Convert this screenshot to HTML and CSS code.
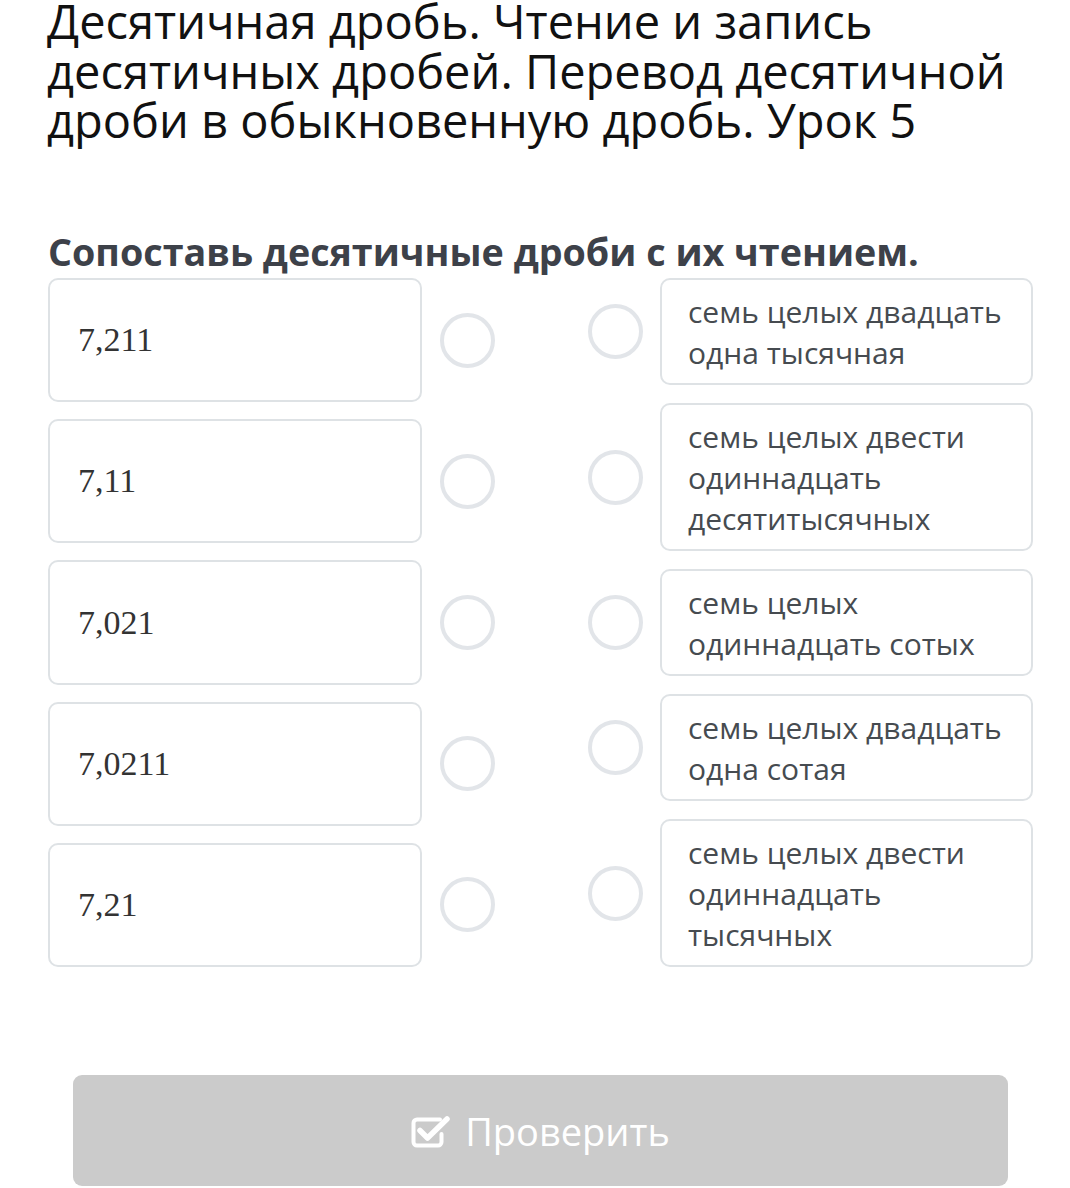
FILE: index.html
```html
<!DOCTYPE html>
<html lang="ru">
<head>
<meta charset="utf-8">
<link rel="stylesheet" href="styles.css">
</head>
<body>
<div class="page">
  <h1 class="title">Десятичная дробь. Чтение и запись десятичных дробей. Перевод десятичной дроби в обыкновенную дробь. Урок 5</h1>
  <h2 class="task">Сопоставь десятичные дроби с их чтением.</h2>
  <div class="match">
    <div class="col col-left">
      <div class="row"><div class="card num">7,211</div><span class="dot"></span></div>
      <div class="row"><div class="card num">7,11</div><span class="dot"></span></div>
      <div class="row"><div class="card num">7,021</div><span class="dot"></span></div>
      <div class="row"><div class="card num">7,0211</div><span class="dot"></span></div>
      <div class="row"><div class="card num">7,21</div><span class="dot"></span></div>
    </div>
    <div class="col col-right">
      <div class="row"><span class="dot"></span><div class="card words">семь целых двадцать одна тысячная</div></div>
      <div class="row"><span class="dot"></span><div class="card words">семь целых двести одиннадцать десятитысячных</div></div>
      <div class="row"><span class="dot"></span><div class="card words">семь целых одиннадцать сотых</div></div>
      <div class="row"><span class="dot"></span><div class="card words">семь целых двадцать одна сотая</div></div>
      <div class="row"><span class="dot"></span><div class="card words">семь целых двести одиннадцать тысячных</div></div>
    </div>
  </div>
  <button class="check-btn" type="button">
    <svg class="check-icon" viewBox="0 0 40 32" width="40" height="32" aria-hidden="true">
      <path d="M29 3.5 H6 a3.5 3.5 0 0 0 -3.5 3.5 v19 a3.5 3.5 0 0 0 3.5 3.5 h21 a3.5 3.5 0 0 0 3.5 -3.5 v-8" fill="none" stroke="#fff" stroke-width="4" stroke-linecap="round"/>
      <path d="M9 14.5 L16.5 22 L36 3" fill="none" stroke="#fff" stroke-width="5.5" stroke-linecap="round" stroke-linejoin="round"/>
    </svg>
    <span>Проверить</span>
  </button>
</div>
</body>
</html>
```

FILE: styles.css
```css
html, body {
  margin: 0;
  padding: 0;
  background: #ffffff;
}

body {
  font-family: "Open Sans", "Noto Sans", sans-serif;
}

.page {
  width: 985px;
  padding-left: 48px;
}

.title {
  margin: -3px 0 0 -1px;
  font-size: 47px;
  line-height: 49.7px;
  font-weight: 400;
  color: #111111;
}

.task {
  margin: 83px 0 4px 0;
  font-size: 37.7px;
  line-height: 45px;
  font-weight: 700;
  color: #3d4149;
}

.match {
  display: flex;
  justify-content: space-between;
}

.col {
  display: flex;
  flex-direction: column;
}

.col-left {
  gap: 17px;
}

.col-right {
  gap: 18px;
}

.row {
  display: flex;
  align-items: center;
}

.card {
  box-sizing: border-box;
  border: 2px solid #dee2e5;
  border-radius: 10px;
  background: #ffffff;
}

.num {
  width: 374px;
  height: 124.2px;
  display: flex;
  align-items: center;
  padding-left: 28px;
  font-family: "Liberation Serif", "DejaVu Serif", serif;
  font-size: 34px;
  color: #333333;
}

.words {
  width: 373px;
  padding: 10.5px 12px 10.5px 26px;
  font-size: 30px;
  line-height: 41px;
  color: #464b50;
}

.dot {
  box-sizing: border-box;
  width: 55px;
  height: 55px;
  border: 4.5px solid #e2e5e9;
  border-radius: 50%;
  flex: none;
}

.col-left .dot {
  margin-left: 18px;
}

.col-right .dot {
  margin-right: 17px;
}

.check-btn {
  box-sizing: border-box;
  display: flex;
  align-items: center;
  justify-content: center;
  gap: 14px;
  width: 935px;
  height: 111px;
  margin: 108px 0 0 25px;
  padding: 0;
  border: none;
  border-radius: 9px;
  background: #cbcbcb;
  color: #ffffff;
  font-family: "Open Sans", "Noto Sans", sans-serif;
  font-size: 38px;
  line-height: 1;
}

.check-icon {
  display: block;
  margin-top: 2px;
}
```
